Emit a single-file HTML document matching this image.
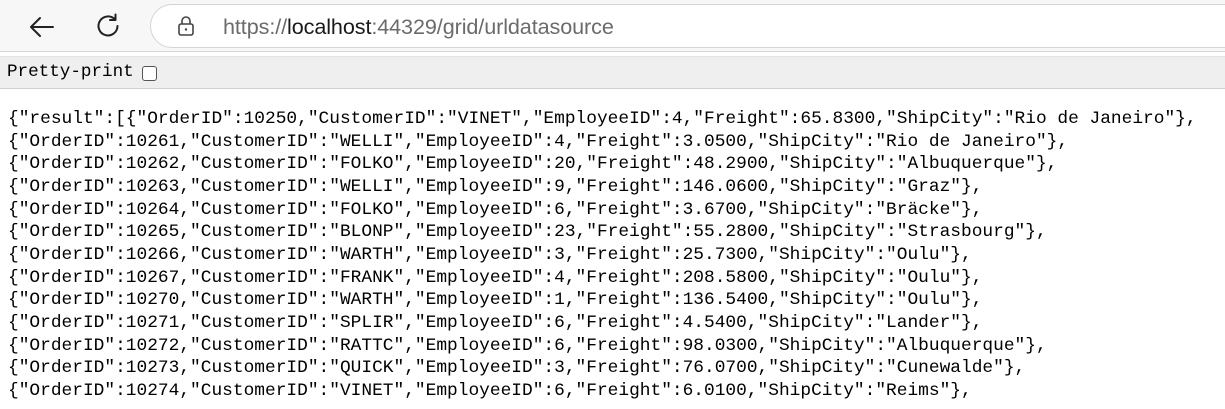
<!DOCTYPE html>
<html><head><style>
html,body{margin:0;padding:0;width:1225px;height:409px;overflow:hidden;background:#fff}
.tb{position:absolute;left:0;top:0;width:1225px;height:51px;background:#f7f7f7;border-bottom:1px solid #d6d6d6}
.url{position:absolute;left:150px;top:4px;width:1120px;height:44px;background:#fff;border:1px solid #d4d4d4;border-radius:23px;box-sizing:border-box}
.urltext{position:absolute;left:223px;top:14px;font-family:"Liberation Sans",sans-serif;font-size:21.6px;color:#6b6b6b;letter-spacing:-0.1px}
.urltext b{font-weight:normal;color:#1a1a1a}
.pp{position:absolute;left:0;top:56px;width:1225px;height:31px;background:#efefef;border-bottom:1px solid #cfcfcf;border-top:1px solid #e4e4e4}
.pp span{position:absolute;left:7px;top:5px;font-family:"Liberation Mono",monospace;font-size:17.6px;color:#000}
.cb{position:absolute;left:142px;top:9px;width:13px;height:13px;border:1.5px solid #555;border-radius:3px;background:#fff}
pre{position:absolute;left:8px;top:108px;margin:0;font-family:"Liberation Mono",monospace;font-size:17.85px;line-height:22.65px;color:#000}
</style></head><body>
<div class="tb">
<svg style="position:absolute;left:28px;top:14px" width="28" height="26" viewBox="0 0 28 26"><path d="M25 13H3M12 4L3 13L12 22" fill="none" stroke="#222" stroke-width="2" stroke-linecap="round" stroke-linejoin="round"/></svg>
<svg style="position:absolute;left:94px;top:12px" width="28" height="28" viewBox="0 0 28 28"><path d="M21 7.5A9.5 9.5 0 1 0 23.5 14" fill="none" stroke="#222" stroke-width="2" stroke-linecap="round"/><path d="M21.5 2.5V8H16" fill="none" stroke="#222" stroke-width="2" stroke-linecap="round" stroke-linejoin="round"/></svg>
<div class="url"></div>
<svg style="position:absolute;left:177px;top:15px" width="18" height="22" viewBox="0 0 18 22"><rect x="2" y="9" width="14" height="11" rx="2" fill="none" stroke="#444" stroke-width="1.6"/><path d="M5 9V6a4 4 0 0 1 8 0v3" fill="none" stroke="#444" stroke-width="1.6"/><circle cx="9" cy="14.5" r="1.2" fill="#444"/></svg>
<div class="urltext">https://<b>localhost</b>:44329/grid/urldatasource</div>
</div>
<div class="pp"><span>Pretty-print</span><div class="cb"></div></div>
<pre>{"result":[{"OrderID":10250,"CustomerID":"VINET","EmployeeID":4,"Freight":65.8300,"ShipCity":"Rio de Janeiro"},
{"OrderID":10261,"CustomerID":"WELLI","EmployeeID":4,"Freight":3.0500,"ShipCity":"Rio de Janeiro"},
{"OrderID":10262,"CustomerID":"FOLKO","EmployeeID":20,"Freight":48.2900,"ShipCity":"Albuquerque"},
{"OrderID":10263,"CustomerID":"WELLI","EmployeeID":9,"Freight":146.0600,"ShipCity":"Graz"},
{"OrderID":10264,"CustomerID":"FOLKO","EmployeeID":6,"Freight":3.6700,"ShipCity":"Bräcke"},
{"OrderID":10265,"CustomerID":"BLONP","EmployeeID":23,"Freight":55.2800,"ShipCity":"Strasbourg"},
{"OrderID":10266,"CustomerID":"WARTH","EmployeeID":3,"Freight":25.7300,"ShipCity":"Oulu"},
{"OrderID":10267,"CustomerID":"FRANK","EmployeeID":4,"Freight":208.5800,"ShipCity":"Oulu"},
{"OrderID":10270,"CustomerID":"WARTH","EmployeeID":1,"Freight":136.5400,"ShipCity":"Oulu"},
{"OrderID":10271,"CustomerID":"SPLIR","EmployeeID":6,"Freight":4.5400,"ShipCity":"Lander"},
{"OrderID":10272,"CustomerID":"RATTC","EmployeeID":6,"Freight":98.0300,"ShipCity":"Albuquerque"},
{"OrderID":10273,"CustomerID":"QUICK","EmployeeID":3,"Freight":76.0700,"ShipCity":"Cunewalde"},
{"OrderID":10274,"CustomerID":"VINET","EmployeeID":6,"Freight":6.0100,"ShipCity":"Reims"},</pre>
</body></html>
